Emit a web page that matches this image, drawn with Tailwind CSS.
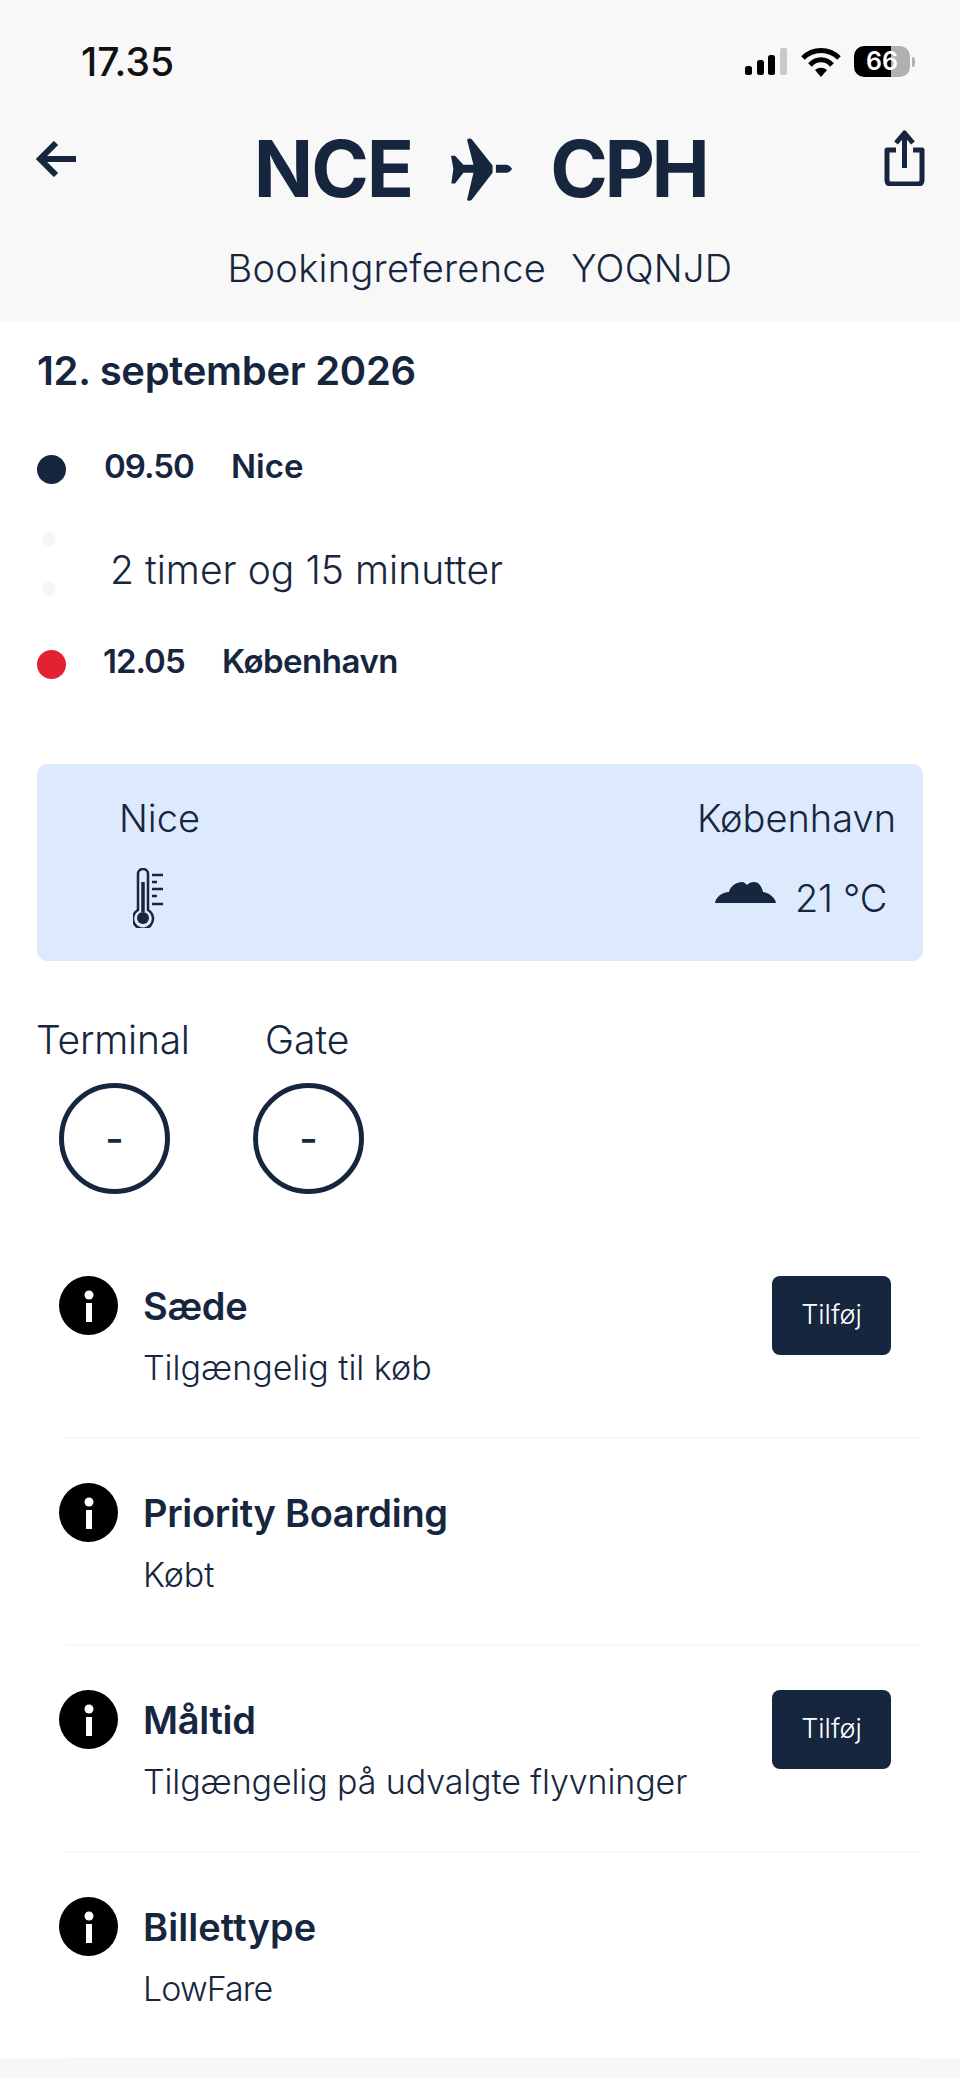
<!DOCTYPE html>
<html lang="da">
<head>
  <meta charset="UTF-8" />
  <meta name="viewport" content="width=device-width, initial-scale=1.0">
  <title>NCE - CPH</title>
  <script src="https://cdn.jsdelivr.net/npm/@tailwindcss/browser@4"></script>
</head>
<body class="bg-white text-[#17263f] font-['Inter',sans-serif] w-[960px] h-[2078px] overflow-hidden">

  <!-- Header -->
  <header class="bg-[#f8f8f8] h-[322px] flex flex-col">
    <!-- Status bar -->
    <div class="flex items-center h-[31px] mt-[46px] pl-[81px] pr-[45px]">
      <span class="text-[39px] leading-[31px] font-medium text-[#111]">17.35</span>
      <svg class="ml-auto w-[42px] h-[27px]" viewBox="0 0 42 27">
        <rect x="0" y="18" width="7" height="9" rx="2.5" fill="#000"/>
        <rect x="12" y="12" width="7" height="15" rx="2.5" fill="#000"/>
        <rect x="23" y="7" width="7" height="20" rx="2.5" fill="#000"/>
        <rect x="35" y="0" width="7" height="27" rx="2" fill="#c9c9c9"/>
      </svg>
      <svg class="ml-[14px] w-[40px] h-[30px]" viewBox="0 0 40 30" fill="none" stroke="#000" stroke-width="5">
        <path d="M2 11 C12 1 28 1 38 11"/>
        <path d="M9 18 C15 11 25 11 31 18"/>
        <path d="M14 23 L20 30 L26 23 C22 20 18 20 14 23 Z" fill="#000" stroke="none"/>
      </svg>
      <div class="ml-[13px] w-[56px] h-[31px] rounded-[10px] flex items-center justify-center bg-[linear-gradient(90deg,#000_66%,#b0b0b0_66%)] text-white text-[25px] font-semibold leading-none">66</div>
      <div class="ml-[2px] w-[3px] h-[10px] rounded-r-full bg-[#b0b0b0]"></div>
    </div>

    <!-- Route row -->
    <div class="flex items-start mt-[59px] pl-[35px] pr-[35px] h-[66px]">
      <svg class="w-[41px] h-[36px] mt-[5px]" viewBox="0 0 41 36" fill="none" stroke="#17263f" stroke-width="6">
        <path d="M21 2 L5 18 L21 34"/>
        <path d="M5 18 H41"/>
      </svg>
      <div class="flex-1 flex items-center justify-center h-[66px]">
        <span class="text-[78px] leading-[66px] font-bold tracking-[-2px]">NCE</span>
        <svg class="ml-[38px] mr-[38px] w-[62px] h-[63px]" viewBox="85 42 185 188" fill="#17263f">
          <path d="M222 122 H250 C260 122 266 127 270 134 C266 141 260 146 250 146 H222 Z"/>
          <path d="M212 124 V146 L150 226 C146 230 138 230 136 226 L155 146 H125 L100 178 H89 L95 134 L88 95 H100 L125 122 H155 L136 48 C138 43 146 42 150 46 Z"/>
        </svg>
        <span class="text-[78px] leading-[66px] font-bold tracking-[-3.5px]">CPH</span>
      </div>
      <svg class="w-[41px] h-[56px] mt-[-6px]" viewBox="0 0 41 56" fill="none" stroke="#17263f" stroke-width="5" stroke-linejoin="round">
        <path d="M12 20 H3 V50 Q3 54 7 54 H34 Q38 54 38 50 V20 H29"/>
        <path d="M20.5 38 V4"/>
        <path d="M12 13 L20.5 3 L29 13" />
      </svg>
    </div>

    <div class="flex justify-center gap-[25px] mt-[44px] text-[38px] leading-[44px] font-light tracking-[0.3px]">
      <span>Bookingreference</span>
      <span>YOQNJD</span>
    </div>
  </header>

  <!-- Itinerary -->
  <section class="pl-[37px] pt-[27px]">
    <h2 class="text-[40px] leading-[44px] font-semibold tracking-[-0.3px]">12. september 2026</h2>
    <div class="flex items-center mt-[62px] h-[29px]">
      <div class="w-[29px] h-[29px] rounded-full bg-[#17263f]"></div>
      <span class="ml-[38px] w-[127px] text-[33px] font-semibold leading-none -mt-[6px] tracking-[-1px]">09.50</span>
      <span class="text-[33px] font-semibold leading-none -mt-[6px]">Nice</span>
    </div>
    <div class="flex mt-[48px] h-[118px]">
      <div class="flex flex-col gap-[36px] ml-[5px] w-[14px]">
        <div class="w-[14px] h-[14px] rounded-full bg-[#f5f5f5]"></div>
        <div class="w-[14px] h-[14px] rounded-full bg-[#f5f5f5]"></div>
      </div>
      <span class="ml-[54px] mt-[16px] text-[39px] font-light leading-[44px] tracking-[0.05px]">2 timer og 15 minutter</span>
    </div>
    <div class="flex items-center h-[29px]">
      <div class="w-[29px] h-[29px] rounded-full bg-[#e32130]"></div>
      <span class="ml-[37px] w-[119px] text-[33px] font-semibold leading-none -mt-[6px] tracking-[-1px]">12.05</span>
      <span class="text-[33px] font-semibold leading-none -mt-[6px] tracking-[-0.5px]">København</span>
    </div>
  </section>

  <!-- Weather -->
  <section class="mx-[37px] mt-[85px] h-[197px] rounded-[10px] bg-[#dde9fd] flex justify-between font-light">
    <div class="pl-[82px] pt-[32px]">
      <div class="text-[38px] leading-[44px]">Nice</div>
      <svg class="w-[30px] h-[60px] mt-[28px] ml-[14px]" viewBox="0 0 30 60" fill="none" stroke="#17263f">
        <path d="M5 42 V6 a5 5 0 0 1 10 0 V42 a10 10 0 1 1 -10 0 Z" stroke-width="2.5"/>
        <path d="M10 14 V44" stroke-width="3.5"/>
        <circle cx="10" cy="50" r="6" fill="#17263f" stroke="none"/>
        <path d="M19 7 H30 M19 14 H24 M19 21 H30 M19 28 H24 M19 36 H30" stroke-width="2.5"/>
      </svg>
    </div>
    <div class="pr-[27px] pt-[32px] flex flex-col items-end">
      <div class="text-[38px] leading-[44px]">København</div>
      <div class="flex items-start mt-[40px] pr-[9px]">
        <svg class="w-[61px] h-[21px] mt-[2px]" viewBox="0 0 61 21" fill="#17263f">
          <path d="M0 21 C1 15 7 10 14 10 C15 4 22 0 27 0 C29 0 31 2 32 3 C34 1 36 0 39 0 C44 0 47 5 48 10 C54 11 60 15 61 21 Z"/>
        </svg>
        <span class="ml-[19px] text-[38px] leading-[36px] tracking-[-0.3px]">21 °C</span>
      </div>
    </div>
  </section>

  <!-- Terminal and gate -->
  <section class="pl-[36px] mt-[57px] flex font-light">
    <div class="w-[229px]">
      <div class="text-[39px] leading-[44px] tracking-[-0.2px]">Terminal</div>
      <div class="ml-[23px] mt-[21px] w-[111px] h-[111px] rounded-full border-[5px] border-[#17263f] flex items-center justify-center text-[40px] font-medium">-</div>
    </div>
    <div>
      <div class="text-[39px] leading-[44px]">Gate</div>
      <div class="-ml-[12px] mt-[21px] w-[111px] h-[111px] rounded-full border-[5px] border-[#17263f] flex items-center justify-center text-[40px] font-medium">-</div>
    </div>
  </section>

  <!-- Ancillaries -->
  <section class="mt-[82px]">
    <div class="flex h-[161px] pl-[59px] pr-[69px]">
      <svg class="w-[59px] h-[59px] shrink-0" viewBox="0 0 59 59"><circle cx="29.5" cy="29.5" r="29.5" fill="#000"/><circle cx="30" cy="19" r="4.5" fill="#fff"/><rect x="27" y="27" width="6" height="19" fill="#fff"/></svg>
      <div class="ml-[25px]">
        <div class="text-[38px] leading-[38px] font-semibold mt-[11px] tracking-[-0.3px]">Sæde</div>
        <div class="text-[34px] leading-[38px] font-light mt-[24px]">Tilgængelig til køb</div>
      </div>
      <button class="ml-auto w-[119px] h-[79px] rounded-[8px] bg-[#17263f] text-white text-[27px] font-light">Tilføj</button>
    </div>
    <div class="ml-[66px] w-[854px] h-[2px] bg-[#f7f7f7] mb-[44px]"></div>

    <div class="flex h-[161px] pl-[59px] pr-[69px]">
      <svg class="w-[59px] h-[59px] shrink-0" viewBox="0 0 59 59"><circle cx="29.5" cy="29.5" r="29.5" fill="#000"/><circle cx="30" cy="19" r="4.5" fill="#fff"/><rect x="27" y="27" width="6" height="19" fill="#fff"/></svg>
      <div class="ml-[25px]">
        <div class="text-[38px] leading-[38px] font-semibold mt-[11px] tracking-[-0.3px]">Priority Boarding</div>
        <div class="text-[34px] leading-[38px] font-light mt-[24px]">Købt</div>
      </div>
    </div>
    <div class="ml-[66px] w-[854px] h-[2px] bg-[#f7f7f7] mb-[44px]"></div>

    <div class="flex h-[161px] pl-[59px] pr-[69px]">
      <svg class="w-[59px] h-[59px] shrink-0" viewBox="0 0 59 59"><circle cx="29.5" cy="29.5" r="29.5" fill="#000"/><circle cx="30" cy="19" r="4.5" fill="#fff"/><rect x="27" y="27" width="6" height="19" fill="#fff"/></svg>
      <div class="ml-[25px]">
        <div class="text-[38px] leading-[38px] font-semibold mt-[11px] tracking-[-0.3px]">Måltid</div>
        <div class="text-[34px] leading-[38px] font-light mt-[24px] tracking-[-0.1px]">Tilgængelig på udvalgte flyvninger</div>
      </div>
      <button class="ml-auto w-[119px] h-[79px] rounded-[8px] bg-[#17263f] text-white text-[27px] font-light">Tilføj</button>
    </div>
    <div class="ml-[66px] w-[854px] h-[2px] bg-[#f7f7f7] mb-[44px]"></div>

    <div class="flex h-[160px] pl-[59px] pr-[69px]">
      <svg class="w-[59px] h-[59px] shrink-0" viewBox="0 0 59 59"><circle cx="29.5" cy="29.5" r="29.5" fill="#000"/><circle cx="30" cy="19" r="4.5" fill="#fff"/><rect x="27" y="27" width="6" height="19" fill="#fff"/></svg>
      <div class="ml-[25px]">
        <div class="text-[38px] leading-[38px] font-semibold mt-[11px] tracking-[0.1px]">Billettype</div>
        <div class="text-[34px] leading-[38px] font-light mt-[24px] tracking-[-0.9px]">LowFare</div>
      </div>
    </div>
    <div class="ml-[66px] w-[854px] h-[2px] bg-[#f7f7f7]"></div>
  </section>

  <footer class="h-[19px] bg-[#f7f7f7]"></footer>
</body>
</html>
